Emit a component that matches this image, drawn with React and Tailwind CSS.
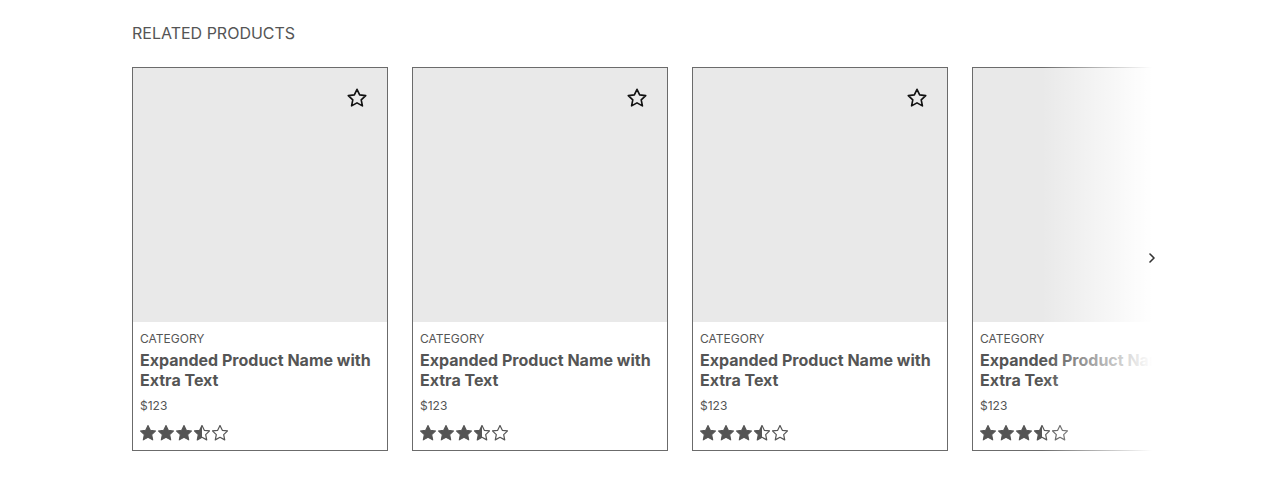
import React from "react";

const STAR = "M12 2.5l2.9 6.1 6.6.8-4.9 4.6 1.3 6.6L12 17.3l-5.9 3.3 1.3-6.6L2.5 9.4l6.6-.8z";

function Star({ type }) {
  return (
    <svg width="16" height="16" viewBox="2 2 20 20" className="block">
      <defs>
        <clipPath id="halfclip">
          <rect x="0" y="0" width="12" height="24" />
        </clipPath>
      </defs>
      {type === "full" && <path d={STAR} fill="#555" stroke="#555" strokeWidth="1.3" strokeLinejoin="round" />}
      {type === "half" && (
        <>
          <path d={STAR} fill="#555" clipPath="url(#halfclip)" />
          <path d={STAR} fill="none" stroke="#555" strokeWidth="1.5" strokeLinejoin="round" />
        </>
      )}
      {type === "empty" && <path d={STAR} fill="none" stroke="#555" strokeWidth="1.5" strokeLinejoin="round" />}
    </svg>
  );
}

function Card() {
  return (
    <div className="w-[256px] h-[384px] shrink-0 border border-[#6b6b6b] bg-white flex flex-col">
      <div className="relative h-[254px] bg-[#e9e9e9]">
        <svg width="22" height="22" viewBox="0 0 24 24" className="absolute right-[19px] top-[19px]">
          <path d={STAR} fill="none" stroke="#111" strokeWidth="1.8" strokeLinejoin="round" />
        </svg>
      </div>
      <div className="px-[7px] pt-[9px] text-[#555]">
        <div className="text-[12px] leading-[15px]">CATEGORY</div>
        <div className="mt-[4px] text-[16px] leading-[20px] font-bold">Expanded Product Name with Extra Text</div>
        <div className="mt-[8px] text-[12px] leading-[15px]">$123</div>
        <div className="mt-[12px] flex gap-[2px]">
          <Star type="full" />
          <Star type="full" />
          <Star type="full" />
          <Star type="half" />
          <Star type="empty" />
        </div>
      </div>
    </div>
  );
}

export default function App() {
  return (
    <div className="w-[1287px] h-[486px] bg-white pl-[132px] pt-[23px]" style={{ fontFamily: "Inter, 'Noto Sans', sans-serif" }}>
      <h2 className="text-[16px] leading-[20px] text-[#555]">RELATED PRODUCTS</h2>
      <div className="relative mt-[24px] w-[1020px]">
        <div className="overflow-hidden">
          <div className="flex gap-[24px]">
            <Card />
            <Card />
            <Card />
            <Card />
          </div>
        </div>
        <div className="absolute right-0 top-0 h-full w-[110px] bg-gradient-to-r from-white/0 to-white" />
        <svg width="12" height="12" viewBox="0 0 24 24" className="absolute right-[-6px] top-[185px]">
          <path d="M8 4l8 8-8 8" fill="none" stroke="#333" strokeWidth="3.2" strokeLinecap="round" strokeLinejoin="round" />
        </svg>
      </div>
    </div>
  );
}
